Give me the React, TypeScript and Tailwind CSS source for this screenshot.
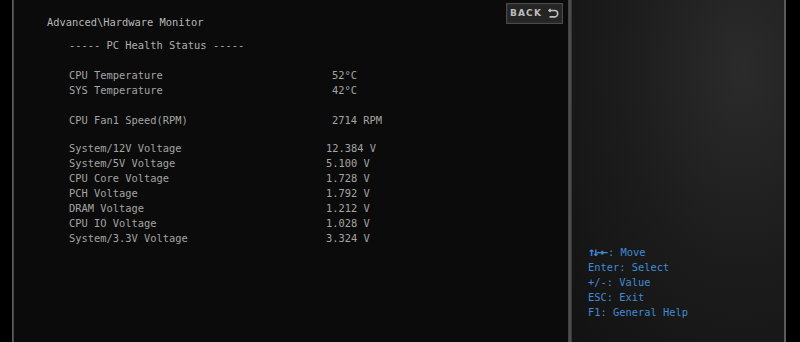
import React from 'react'

const mono = { fontFamily: '"DejaVu Sans Mono", "Liberation Mono", monospace' }

const temps = [
  { label: 'CPU Temperature', value: '52°C' },
  { label: 'SYS Temperature', value: '42°C' },
]

const voltages = [
  { label: 'System/12V Voltage', value: '12.384 V' },
  { label: 'System/5V Voltage', value: '5.100 V' },
  { label: 'CPU Core Voltage', value: '1.728 V' },
  { label: 'PCH Voltage', value: '1.792 V' },
  { label: 'DRAM Voltage', value: '1.212 V' },
  { label: 'CPU IO Voltage', value: '1.028 V' },
  { label: 'System/3.3V Voltage', value: '3.324 V' },
]

const help = [
  { key: '↑↓→←', text: ': Move' },
  { key: 'Enter', text: ': Select' },
  { key: '+/-', text: ': Value' },
  { key: 'ESC', text: ': Exit' },
  { key: 'F1', text: ': General Help' },
]

const Row = ({ label, value, indent = 'pl-[263px]' }: { label: string; value: string; indent?: string }) => (
  <div className="flex h-[15px] items-center">
    <span className="w-0 whitespace-pre">{label}</span>
    <span className={`${indent} whitespace-pre`}>{value}</span>
  </div>
)

const BackIcon = () => (
  <svg width="12" height="11" viewBox="0 0 12 11" fill="none" stroke="#bdbdbd" strokeWidth="1.6">
    <path d="M2 2.5 H7.5 a3.2 3.2 0 0 1 0 6.4 H2.5" />
    <path d="M3.6 1 L2 2.5 L3.6 4" />
  </svg>
)

export default function App() {
  return (
    <div className="flex h-[342px] w-[800px] overflow-hidden bg-black text-[10.4px] text-[#a4a4a4]" style={mono}>
      <div className="w-[12px] shrink-0 bg-black" />
      <div className="w-[2px] shrink-0 bg-[linear-gradient(90deg,#6a6a6a,#3a3a3a)]" />

      {/* main panel */}
      <div className="relative w-[554px] shrink-0 bg-[#0b0b0b] pl-[33px] pt-[15px]">
        <div className="h-[15px] leading-[15px] text-[#b8b8b8]">Advanced\Hardware Monitor</div>
        <div className="mt-[8px] h-[15px] pl-[22px] leading-[15px] text-[#b0b0b0]">----- PC Health Status -----</div>

        <div className="mt-[15px] pl-[22px]">
          {temps.map((t) => (
            <Row key={t.label} label={t.label} value={t.value} />
          ))}
        </div>

        <div className="mt-[15px] pl-[22px]">
          <Row label="CPU Fan1 Speed(RPM)" value="2714 RPM" />
        </div>

        <div className="mt-[13px] pl-[22px]">
          {voltages.map((v) => (
            <Row key={v.label} label={v.label} value={v.value} indent="pl-[257px]" />
          ))}
        </div>

        <button className="absolute right-[5px] top-[3px] flex h-[21px] w-[57px] items-center justify-center gap-[5px] border border-[#4a4a4a] bg-[#242424] shadow-[inset_0_0_3px_#363636]">
          <span
            className="text-[9px] font-bold tracking-[1.2px] text-[#bcbcbc]"
            style={{ fontFamily: '"DejaVu Sans", "Liberation Sans", sans-serif' }}
          >
            BACK
          </span>
          <BackIcon />
        </button>
      </div>

      {/* divider */}
      <div className="w-[4px] shrink-0 bg-[linear-gradient(90deg,#3c3c3c,#555555,#2e2e2e)]" />

      {/* right panel */}
      <div className="flex w-[212px] shrink-0 flex-col justify-end bg-[radial-gradient(ellipse_at_80%_20%,#2b2b2b,#1c1c1c_50%,#121212_100%)] pb-[22px] pl-[16px] text-[#3f8bd6]">
        {help.map((h) => (
          <div key={h.key} className="h-[15px] leading-[15px] whitespace-pre">
            <span className={h.key === '↑↓→←' ? 'text-[12px] font-bold tracking-[-3px] pr-[3px]' : ''}>{h.key}</span>
            {h.text}
          </div>
        ))}
      </div>

      <div className="w-[2px] shrink-0 bg-[#5a5a5a]" />
      <div className="flex-1 bg-black" />
    </div>
  )
}
